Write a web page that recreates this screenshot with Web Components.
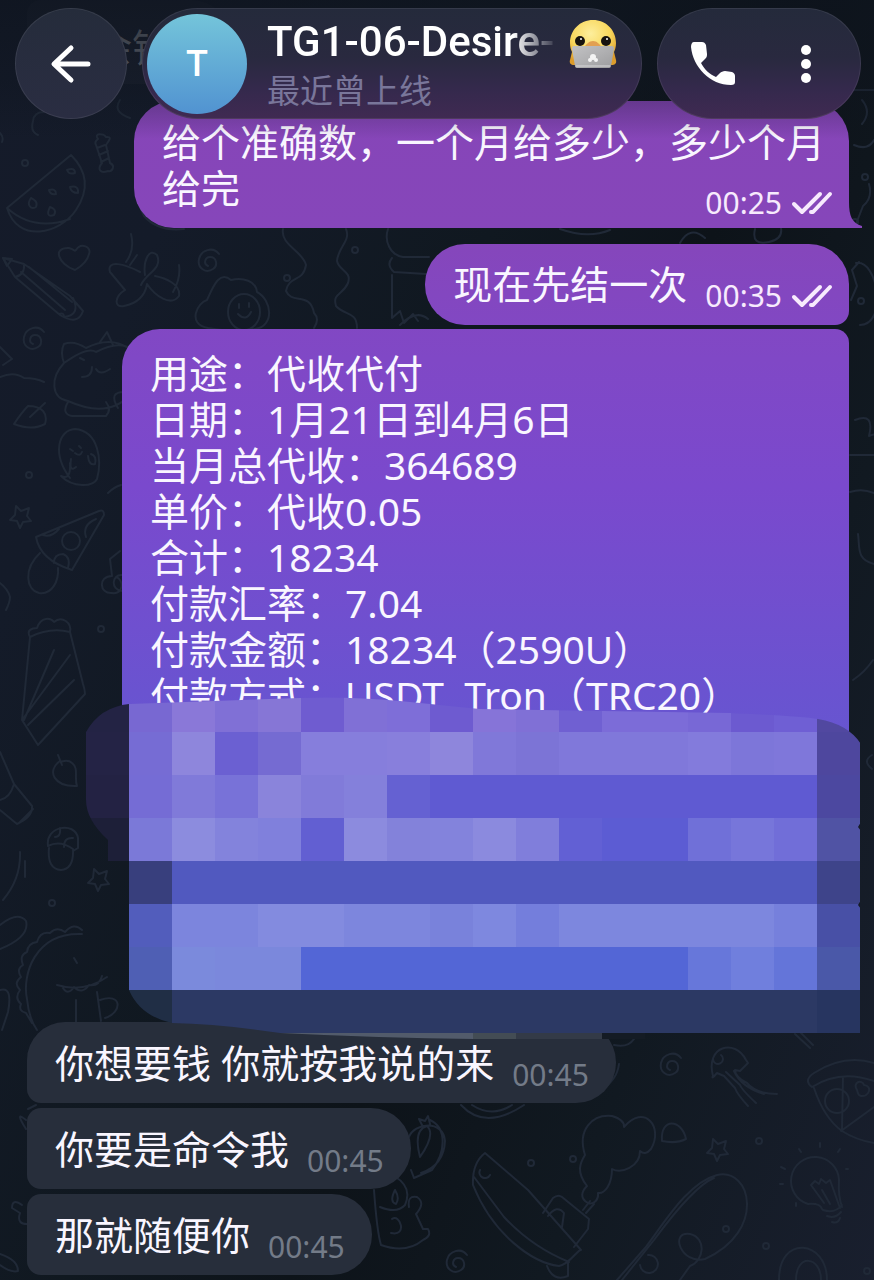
<!DOCTYPE html>
<html lang="zh-CN">
<head>
<meta charset="utf-8">
<meta name="viewport" content="width=device-width, initial-scale=1">
<title>TG1-06-Desire</title>
<style>
  body {
    margin: 0;
    background: #121922;
    font-family: "Noto Sans", "Noto Sans CJK SC", sans-serif;
    --tg-text: #f9f6ff;
    --tg-out: linear-gradient(180deg, #8645b6 0, #8646ba 18%, #8048c6 28%, #7a49cd 38%, #6a53d0 54%, #5f5bd2 66%, #5466d6 76%, #4f6ad8 100%);
    --tg-in: #272e3b;
  }
</style>
</head>
<body>
<tg-chat>
  <tg-header slot="header" name="TG1-06-Desire-" status="最近曾上线" initial="T"></tg-header>
  <tg-message class="faded">余钱</tg-message>
  <tg-message out tail time="00:25" class="block">给个准确数，一个月给多少，多少个月给完</tg-message>
  <tg-message out time="00:35" class="block-start">现在先结一次</tg-message>
  <tg-message out long>用途：代收代付
日期：1月21日到4月6日
当月总代收：364689
单价：代收0.05
合计：18234
付款汇率：7.04
付款金额：18234（2590U）
付款方式：USDT&nbsp; Tron（TRC20）<tg-mosaic slot="cover"></tg-mosaic></tg-message>
  <tg-message first time="00:45">你想要钱 你就按我说的来</tg-message>
  <tg-message time="00:45">你要是命令我</tg-message>
  <tg-message time="00:45">那就随便你</tg-message>
</tg-chat>

<script>
/**
 * <tg-wallpaper> - line doodles over the dark chat gradient.
 */
class TgWallpaper extends HTMLElement {
  constructor() {
    super();
    this.attachShadow({ mode: 'open' });
  }

  connectedCallback() {
    const dots = [[25, 163], [29, 475], [101, 629], [52, 903], [531, 1163], [573, 1159], [759, 1141], [726, 1229], [766, 1246], [355, 250], [287, 278], [865, 177], [855, 222], [861, 301], [867, 1271]];
    const spirals = [[35, 341], [672, 1067], [458, 1264], [210, 263]];
    const stars = [[20, 515], [717, 1148], [98, 878]];

    this.shadowRoot.innerHTML = `
      <style>${this.styles()}</style>
      <svg viewBox="0 0 874 1280" preserveAspectRatio="xMidYMin slice" aria-hidden="true">
        ${dots.map(d => `<circle cx="${d[0]}" cy="${d[1]}" r="3"/>`).join('')}
        ${spirals.map(s => `<path transform="translate(${s[0]} ${s[1]})" d="M-2 3c-5-2-3-9 2-9 7 0 8 9 3 12-7 5-16-1-14-10C-9-13 3-17 9-9"/>`).join('')}
        ${stars.map(s => `<path transform="translate(${s[0]} ${s[1]})" d="M-4-9 1-4l8-3-2 8 4 5-8 1-3 6-3-7-7-1 5-5z"/>`).join('')}

        <!-- candy, watermelon -->
        <path d="M98 139c-5-6 6-6 8-2 8-1 1 6 0 8l4 18c6 3 2 9-2 8-8 3-11-2-6-8l-6-18q-2-3 2-6M97 148l8-3M99 155l9-4M101 162l8-4"/>
        <path d="M71 155 7 208C18 244 60 234 76 210Q96 180 71 155ZM7 208Q34 232 70 219M67 170q8-3 8 3-6 2-8-3M49 190q7-2 7 4-6 1-7-4M70 187q9-2 8 6-7 0-8-6M31 198c-5 7 0 12 5 9 2-5-1-7-5-9M50 207c-4 8-1 10 4 8 3-5-1-7-4-8"/>
        <path d="M0 133q4 4 2 9M33 121q-3 11 5 14M44 112q-10 0-11 9M120 100q-8 12 10 18M140 140q-12 45 4 76 14 16 40 13"/>

        <!-- pencil, heart, plane -->
        <path d="M3 258 15 277 60 315Q78 326 83 311L70 296 24 264ZM15 277Q25 275 24 264M21 272 65 310M29 267 72 302M59 314Q64 312 64 317 81 315 73 298"/>
        <path d="M3 258l9 1-5 7z" fill="#202737"/>
        <path d="M75 270C58 264 52 247 69 248 76 250 74 252 76 250 81 242 92 247 89 254Q87 263 75 270Z"/>
        <path d="M131 234q4 16-5 28M137 255l-7 10M140 272c-15-8-34-13-30 0l15 18c-10 6-12 18-1 16q20-4 23-22M141 285c5-12 22-16 16-30-8-8-14 6-12 20M147 284c8 12 24 23 32 12 2-12-14-18-24-20M179 265q2 13-6 27"/>

        <!-- fried egg, wavy line, bear -->
        <path d="M208 328c-22-4-10-26-1-28 6-13 12-30 24-20 12-3 25 1 26 12 15 8 18 34-2 37-14 4-30 2-47-1M228 312a16 18 0 1 0 32 0 16 18 0 1 0-32 0M239 304v4M249 303v4M238 314q8 8 13-2"/>
        <path d="M283 229c-3 16 20 22 23 36-3 18-17 10-20 26 6 14 24 0 28 22q6 6 0 15M346 229c5 12-8 18-9 32 2 10 15 10 11 22-5 12-16 10-12 23 9 10 21 5 21 22"/>
        <path d="M388 229c-4 12 2 26 15 28h26M392 258q-6 7 2 14l32 2M392 275v43l8-7 4 12 9-9 5 7M400 325q16-16 28-6M560 229q28 10 50 1M680 243q10-18 25-5M755 229q-4 17 14 13 14-3 12-14"/>

        <!-- sleeping cat, leaf, ghost -->
        <path d="M128 348q-18-12-42 0-12-8-22-4-4 8 0 19c-14 15-13 35 4 38q40 18 62-6M64 363Q88 346 96 352 118 340 132 349M100 342l7-10 6 13M80 358l4 2M82 377q10 0 10-10M96 369q4 7 14 0M68 402q-7 12 4 14h34q6-6 0-14M124 392q-16 0-6 16"/>
        <path d="M14 424q8-12 14-18c15 0 20 8 17 18q-13 7-31 0M30 417l15-14M0 377q14-6 24 1 12 0 20 4M0 347l12 12-9 6"/>
        <path d="M70 478c-18-24-12-48 5-49 24 2 27 32 22 50-4 8-24 9-36-3q10 5 9-13M70 449l3 2M79 446l2 2M75 453q5 4 7-1M71 459q-2 14 5 8M88 456q1 10 7 8 2-8-4-10"/>

        <!-- pizza, mushroom, cup -->
        <path d="M36 537 99 511q5-2 5 4L72 570Q40 560 36 537ZM62 541a9 9 0 1 0 18 0 9 9 0 1 0-18 0M43 535q8 3 16-6M96 519q-14 6-10 18M54 563q0-9 9-9 8 3 5 14M40 553c-17 16-14 37-1 40 13 2 20-12 19-25"/>
        <path d="M0 583q8 6 10 14 0 5-4 13M108 493q6-6 13-8M120 551l-10 8 2 17c-14 0-13 18 0 17 12 2 12-14 4-16M122 575c-10-1-12 15 0 16"/>
        <path d="M30 637c-4-7 2-9 7-9 4-12 14-10 17-6 8-7 18 1 16 10l13 52q2 6 2 10L38 745 22 720ZM24 720 54 650M28 725 74 680M22 720 70 655M30 637q20-10 40-5"/>

        <!-- tube, strawberry, acorn, croissant -->
        <path d="M0 752 14 784 32 806q1 11-15 18L0 810M0 800q10-2 14-16M19 823l14-14M20 852q1 27-17 48M25 861v16M0 949q30-12 26-28-8-10-26 4M0 990q13-4 8 22l-6 18"/>
        <path d="M60 761c-14 10-6 26 17 25-3-8 2-18-5-23-5-5-11 0-12-2M62 765l-4-10M48 846c-3-20 27-25 30-8v10l-5 3M48 846q12-6 25 3 1 20-12 21-14-1-12-22M55 837q6 0 5-9M64 847q0-10 9-9"/>

        <!-- dinosaur -->
        <path d="M82 934c-48-2-60 42-55 65q2 20 10 31M82 930q-8-8-17 2-8-6-15 1-10-2-13 9-9 1-10 10-8 3-4 13-7 4-2 12-8 6-1 13-6 8 1 14-3 7 5 9l6 10M74 958l3 5M57 985q27 8 50-8M62 986q5 11 12 1 8 8 15-2 10 2 13-9M76 1000v24M97 992l4 29M100 1000c22-8 23 12 5 18"/>

        <!-- right edge -->
        <path d="M850 90h24M862 100q10 12 0 24M854 145q14 6 20-5M856 224l7-18q10-8 6-22M851 300l6-14-5-16 7-8M860 325c28 0 18-66-4-62M855 420q20-8 14 16 16-6 8 12M850 455h24M850 492q12-4 24 1M858 534c2 14-2 25 16 30M853 680q12-8 20-20M872 755q-10 6 0 14"/>

        <!-- jellyfish -->
        <path d="M713 1076c-8-30 22-38 33-16l2 3-8 8-5-1q0 7 12 13 9 11 30 11M717 1073q-6 7-4 3M713 1059a5 5 0 1 0 8-4M717 1073l7 3 11 12q2 6 13 18M726 1072l14 13q2 5 16 18M734 1071q7 16 30 23M795 1034l15 14M801 1033l12 12"/>

        <!-- pizza disc -->
        <path d="M812 1087c-7-5-4-10 2-14q30-19 60-10M812 1087q28-18 62-6M814 1088q10 30 28 43 14 9 32 12M843 1077l-1 52M841 1131l33-24M825 1101a12 12 0 1 0 24 0 12 12 0 1 0-24 0M857 1090c-5-8 5-11 7-5 9 1 5 12-3 11-4-1-3-4-4-6"/>

        <!-- light bulb -->
        <path d="M822 1209Q820 1203 808 1204A24 24 0 1 1 839 1180Q838 1196 842 1207M824 1203 811 1185l4-4 4 3 2-5 5 4 4-3 10 28M822 1190l8 14M823 1210q12 4 19-5M827 1216q8 3 14-4M832 1222q6 2 8-4M799 1149l2 3M820 1143v4M840 1149l-2 3M781 1167l4 2M780 1184h3M796 1206v-3M846 1169h2"/>

        <!-- steamboat -->
        <path d="M485 1153q-13 10-12 32c20 50 60 78 86 81 11-2 18-16 22-16L528 1190ZM474 1177l30 40q28 30 65 45M480 1170a5 5 0 1 0 10 5M543 1213l10-15q5-4 9-1l27 22-1 10-14 18M548 1216q9-12 16-3l-2 14M583 1210l7-9M586 1213l8-9M547 1266q6 16 21 10v-13"/>
        <path d="M588 1203c-9-5-6-12-1-17-11-14-7-23-2-31-8-25 7-41 27-39q13 4 12 11c20-24 40 0 27 22q-6 7-11 2c0 16-19 23-28 18 0 15-7 25-14 24 1 8-6 12-10 10M662 1141c-2-24 20-22 24-2q-10 5-24 2"/>

        <!-- fishing rod, porthole -->
        <path d="M717 1175c-30 8-54 50-72 73l-28 32M714 1178q-20 8-60 62l-32 40M717 1175c34-8 50 56-12 84-24 6-36-28-15-25 17 4 14 27 0 32l-10 14M640 1265a9 9 0 1 0 8-10M779 1280c0-46 48-40 48 0M796 1280c0-27 25-24 25 0"/>

        <!-- jar, carrot bubble, bunny -->
        <path d="M461 1105q24 26 63 0M472 1105q20 13 40 0M430 1120c17 8 16 32 2 50l-18 8-3-8M421 1173q23-8 24-32c-2-22-31-18-36-4M420 1157q-7-27 7-31 9 8-7 31M423 1127l-4-8 6 2 3-5 2 8M374 1190q3 42 7 55 25 9 42-5 9-4 5-11l-5 0-7-15q10-11 1-17-10-2-8 10M394 1176q19 11 11 29-8 9-25 2M392 1219c8-6 16 18-1 14M395 1190q-6 12 1 14 4-6-1-14"/>
        <path d="M22 1205q-10-7-10 3l8 5q-4 12 9 11M0 1254q18 6 18 17-7 2-18-6M36 1105l-8 4M26 1120q-12-10 0 9M600 1090q17-9 19-26M614 1045q14 3 20-6"/>
      </svg>
    `;
  }

  styles() {
    return `
      :host {
        position: absolute; inset: 0; overflow: hidden;
        background: linear-gradient(112deg, #151b2a 0%, #141b29 18%, #101820 42%, #0d1319 58%, #111921 76%, #191f2e 100%);
      }
      svg { display: block; width: 100%; height: 100%; }
      path, circle {
        fill: none; stroke: #202937; stroke-width: 2;
        stroke-linecap: round; stroke-linejoin: round;
      }
    `;
  }
}

/**
 * <tg-header> - floating pills above the messages.
 *
 * Attributes: name, status, initial
 */
class TgHeader extends HTMLElement {
  constructor() {
    super();
    this.attachShadow({ mode: 'open' });
  }

  connectedCallback() {
    const name = this.getAttribute('name') || '';
    const status = this.getAttribute('status') || '';
    const initial = this.getAttribute('initial') || '';

    this.shadowRoot.innerHTML = `
      <style>${this.styles()}</style>
      <header>
        <button class="pill back" type="button" aria-label="返回">
          <svg width="42" height="40" viewBox="0 0 42 40"><path d="M21 4 4 20l17 16M5 20h33" fill="none" stroke="#fff" stroke-width="5" stroke-linecap="round" stroke-linejoin="round"/></svg>
        </button>
        <div class="pill peer">
          <div class="avatar">${initial}</div>
          <div class="info">
            <div class="top">
              <h1>${name}</h1>
              ${this.duck()}
            </div>
            <p>${status}</p>
          </div>
        </div>
        <div class="pill actions">
          <button type="button" aria-label="通话">
            <svg width="44" height="44" viewBox="0 0 44 44"><path d="M3 0h8c2 0 3 1 4 3l1 9c0 2 0 3-2 5l-4 4c4 7 8 11 15 14l4-4c1-1 3-2 5-2l7 1c2 1 3 2 3 4v6c0 2-1 3-4 3C19 43 2 25 0 5 0 2 1 0 3 0Z" fill="#fff"/></svg>
          </button>
          <button type="button" aria-label="更多">
            <svg width="12" height="40" viewBox="0 0 12 40"><g fill="#fff"><circle cx="6" cy="6" r="5"/><circle cx="6" cy="20" r="5"/><circle cx="6" cy="34" r="5"/></g></svg>
          </button>
        </div>
      </header>
    `;
  }

  duck() {
    return `
      <svg class="duck" width="48" height="54" viewBox="0 -4 48 54" aria-hidden="true">
        <defs>
          <radialGradient id="d" cx=".45" cy=".3" r=".7"><stop offset="0" stop-color="#fdee9c"/><stop offset=".6" stop-color="#f8d75c"/><stop offset="1" stop-color="#dc9c2c"/></radialGradient>
          <linearGradient id="l" x2="1" y2="1"><stop offset="0" stop-color="#c2c2c4"/><stop offset=".5" stop-color="#b0b0b2"/><stop offset="1" stop-color="#9c9c9e"/></linearGradient>
        </defs>
        <path d="M24 1C37 1 47 11 47 24c0 4-1 7-2 9l2 8c1 4-2 5-4 5H5c-3 0-5-2-4-5l2-8c-1-2-2-5-2-9C1 11 11 1 24 1Z" fill="url(#d)"/>
        <circle cx="11" cy="22" r="5" fill="#17130f"/><circle cx="37" cy="22" r="5" fill="#17130f"/>
        <circle cx="12" cy="20" r="1" fill="#fff"/><circle cx="38" cy="20" r="1" fill="#fff"/>
        <path d="M15 28c3-3 5-6 9-6s6 3 9 6z" fill="#e2a052"/>
        <path d="M5 27h38q2 0 2 3l-3 17q0 2-3 2H9q-3 0-3-2L3 30q0-3 2-3Z" fill="url(#l)"/>
        <path d="M7 47h34" stroke="#d8d8da" stroke-width="1"/>
        <g fill="#f4f4f4"><circle cx="24" cy="38" r="3"/><circle cx="21" cy="41" r="2"/><circle cx="27" cy="41" r="2"/></g>
      </svg>
    `;
  }

  styles() {
    return `
      :host { display: block; }
      header {
        display: flex; gap: 15px;
        padding: 8px 13px 20px 15px;
        background: linear-gradient(180deg, rgba(14,20,30,.7) 0, rgba(14,20,30,.4) 60%, rgba(14,20,30,0) 100%);
      }
      .pill {
        box-sizing: border-box; height: 111px; border-radius: 56px;
        border: 1px solid rgba(255,255,255,.08);
        background: linear-gradient(180deg, #242a3b 0%, #29293f 45%, #35294d 75%, #402a52 100%) border-box;
      }
      button {
        padding: 0; border: 0; background: none; cursor: pointer;
        display: flex; align-items: center; justify-content: center;
      }
      .back {
        flex: 0 0 112px; border: 1px solid rgba(255,255,255,.08);
        background: linear-gradient(180deg, #252c3b, #2a2d42) border-box;
      }
      .peer {
        flex: 1; min-width: 0;
        display: flex; align-items: center; gap: 20px;
        padding: 0 24px 0 4px;
      }
      .avatar {
        flex: 0 0 100px; height: 100px; border-radius: 50%;
        background: linear-gradient(180deg, #74c5da, #5193d1);
        color: #fff; font: 500 36px/100px Roboto, sans-serif; text-align: center;
      }
      .info { flex: 1; min-width: 0; }
      .top { display: flex; align-items: center; gap: 16px; }
      h1 {
        flex: 1; min-width: 0; margin: 0;
        font: 500 42px/50px Roboto, sans-serif; color: #fff;
        white-space: nowrap; overflow: hidden;
        -webkit-mask-image: linear-gradient(90deg, #000 86%, transparent 102%);
        mask-image: linear-gradient(90deg, #000 86%, transparent 102%);
      }
      .duck { flex: none; }
      p { margin: 0; font-size: 33px; line-height: 44px; color: #79769a; }
      .actions {
        flex: 0 0 204px;
        display: flex; align-items: center; justify-content: space-between;
        padding: 0 48px 0 33px;
      }
    `;
  }
}

/**
 * <tg-message> - one bubble, the text is the default slot.
 *
 * Attributes:
 *   out, time, tail, first (first of an incoming group),
 *   long (multi line bubble whose lower part is under the "cover" slot)
 */
class TgMessage extends HTMLElement {
  constructor() {
    super();
    this.attachShadow({ mode: 'open' });
  }

  connectedCallback() {
    const time = this.getAttribute('time');
    const ticks = `<svg width="42" height="24" viewBox="0 0 42 24" aria-hidden="true"><path d="M3 13l8 8L29 3M20 21h2L39 3" fill="none" stroke="currentColor" stroke-width="4" stroke-linecap="round" stroke-linejoin="round"/></svg>`;

    this.shadowRoot.innerHTML = `
      <style>${this.styles()}</style>
      <div class="bubble">
        <div class="text"><slot></slot></div>
        ${time ? `<div class="meta"><time>${time}</time>${this.hasAttribute('out') ? ticks : ''}</div>` : ''}
        ${this.hasAttribute('tail') ? `<svg class="tail" width="15" height="26" viewBox="0 0 15 26"><path d="M0 0h1c0 14 3 21 13 24v2H0z" fill="#8646ba"/></svg>` : ''}
        <slot name="cover"></slot>
      </div>
    `;
  }

  styles() {
    return `
      :host { display: flex; margin-top: 5px; }
      :host([out]) { justify-content: flex-end; margin-top: 4px; }
      :host(.block) { margin-top: 17px; }
      :host(.block-start) { margin-top: 16px; }
      .bubble {
        position: relative;
        display: flex; align-items: flex-end; gap: 18px;
        padding: 18px 27px 17px 28px;
        border-radius: 14px 40px 40px 14px;
        background: var(--tg-in); color: var(--tg-text);
        font-size: 39px; line-height: 46px;
      }
      .meta {
        flex: none; display: flex; align-items: center; gap: 9px;
        margin-bottom: -6px;
        font-size: 30px; line-height: 34px; color: #737b88;
      }
      svg { display: block; }
      :host([first]) .bubble { border-top-left-radius: 38px; }
      :host([out]) .bubble {
        padding: 17px 16px 18px 28px;
        border-radius: 40px 40px 14px 40px;
        background: var(--tg-out) fixed;
      }
      :host([out]) .meta { color: #f7eafd; }

      /* the time floats into the last line of wrapped text */
      :host([tail]) .bubble {
        display: block; max-width: 671px;
        padding: 18px 16px 17px 28px;
        border-bottom-right-radius: 0;
      }
      :host([tail]) .text { display: inline; }
      :host([tail]) .meta { float: right; margin: 21px 0 -9px; }
      .tail { position: absolute; right: -14px; bottom: 0; }

      /* the brush strokes hang below the bubble */
      :host([long]) { margin-bottom: 184px; }
      :host([long]) .bubble {
        flex: 1; margin-left: 95px; padding: 21px 28px 120px;
        border-radius: 38px 14px 14px 38px;
      }
      :host([long]) .text { white-space: pre-line; }

      :host(.faded) { margin-top: 0; }
      :host(.faded) .bubble { padding: 24px 60px 14px 66px; background: rgba(39,46,59,.35); color: #7b7f88; }
    `;
  }
}

/**
 * <tg-mosaic> - pixelated strokes brushed over private lines.
 * Cells are 43 units wide, the first column is left of the bubble.
 */
class TgMosaic extends HTMLElement {
  constructor() {
    super();
    this.attachShadow({ mode: 'open' });
  }

  connectedCallback() {
    // each row: [colour, number of cells] runs
    const rows = [
      [['#232344', 1], ['#7868d2', 1], ['#8a78d8', 1], ['#8070d6', 1], ['#8676d6', 1], ['#6f5cd0', 1], ['#8070d6', 1], ['#7e6ed8', 1], ['#6e5bd0', 1], ['#8674d8', 1], ['#8070d6', 1], ['#7060d2', 1], ['#7c6cd8', 2], ['#7868d6', 1], ['#6c5ad0', 1], ['#6f5fd4', 1], ['#5148a0', 1]],
      [['#242345', 1], ['#766cd4', 1], ['#8e86dc', 1], ['#6b60d2', 1], ['#756bd2', 1], ['#867edc', 2], ['#887fdc', 1], ['#8e86dc', 1], ['#8078d9', 1], ['#7c74d6', 1], ['#8078da', 3], ['#837bdc', 1], ['#7d76d9', 1], ['#7f77da', 1], ['#4e479e', 1]],
      [['#232243', 1], ['#756cd5', 1], ['#807ad9', 1], ['#7872d8', 1], ['#8a84db', 1], ['#817bd9', 1], ['#8480db', 1], ['#6561d2', 1], ['#5f5ad2', 9], ['#4c48a0', 1]],
      [['#1d1f38', 1], ['#7b79d8', 1], ['#8c8cde', 1], ['#8383dc', 1], ['#8080dc', 1], ['#625fd2', 1], ['#8c8bde', 1], ['#8382da', 1], ['#8383dc', 1], ['#8b8ade', 1], ['#807edb', 1], ['#6260d4', 1], ['#5c5cd3', 2], ['#7070d8', 1], ['#7776da', 1], ['#716ed8', 1], ['#5053a4', 1]],
      [['none', 1], ['#383f7d', 1], ['#5159bf', 15], ['#3e448a', 1]],
      [['none', 1], ['#525dbc', 1], ['#7c85dd', 2], ['#838bdf', 2], ['#7d86dd', 2], ['#7982db', 1], ['#7e88df', 1], ['#747edc', 1], ['#7d87de', 5], ['#7680dc', 1], ['#4850a6', 1]],
      [['none', 1], ['#4f5fb4', 1], ['#7b8adc', 1], ['#7b88dc', 2], ['#5366d6', 9], ['#6777da', 1], ['#707fdd', 1], ['#6475d9', 1], ['#4a58a8', 1]],
      [['none', 1], ['#202e45', 1], ['#2c3964', 15], ['#273560', 1]],
      [['none', 4], ['#525b6b', 5], ['#434c54', 1], ['#333a47', 2], ['#141b24', 1]]
    ];
    const cell = 43;

    this.shadowRoot.innerHTML = `
      <style>
        :host { position: absolute; left: -36px; right: -13px; bottom: -201px; z-index: 1; }
        svg { display: block; width: 100%; height: 350px; }
      </style>
      <svg viewBox="0 0 776 350" preserveAspectRatio="none" aria-hidden="true">
        <clipPath id="brush">
          <path d="M0 43Q14 18 43 15L214 9q45-2 100 3l80 8 250 4q70 3 88 6 30 5 43 25v78l-3 5 3 4v69l-3 5 3 4v124H559v6H388q-94-1-194-6-60-9-108-10-32-7-43-33V172H22v-21Q0 131 0 111Z"/>
        </clipPath>
        <g clip-path="url(#brush)" shape-rendering="crispEdges">
          ${rows.map((row, y) => {
            let x = 0;
            return row.map(([color, n]) => {
              const rect = `<rect x="${x * cell}" y="${y * cell}" width="${n * cell}" height="${cell}" fill="${color}"/>`;
              x += n;
              return rect;
            }).join('');
          }).join('')}
        </g>
      </svg>
    `;
  }
}

/**
 * <tg-chat> - wallpaper, message list and the header floating on top.
 */
class TgChat extends HTMLElement {
  constructor() {
    super();
    this.attachShadow({ mode: 'open' });
    this.shadowRoot.innerHTML = `
      <style>
        :host { display: block; position: relative; min-height: 100vh; overflow: hidden; }
        slot[name="header"] { display: block; position: absolute; top: 0; left: 0; right: 0; z-index: 2; }
        main { position: relative; padding: 0 25px 5px 27px; }
      </style>
      <tg-wallpaper></tg-wallpaper>
      <slot name="header"></slot>
      <main><slot></slot></main>
    `;
  }
}

customElements.define('tg-wallpaper', TgWallpaper);
customElements.define('tg-header', TgHeader);
customElements.define('tg-message', TgMessage);
customElements.define('tg-mosaic', TgMosaic);
customElements.define('tg-chat', TgChat);
</script>
</body>
</html>
